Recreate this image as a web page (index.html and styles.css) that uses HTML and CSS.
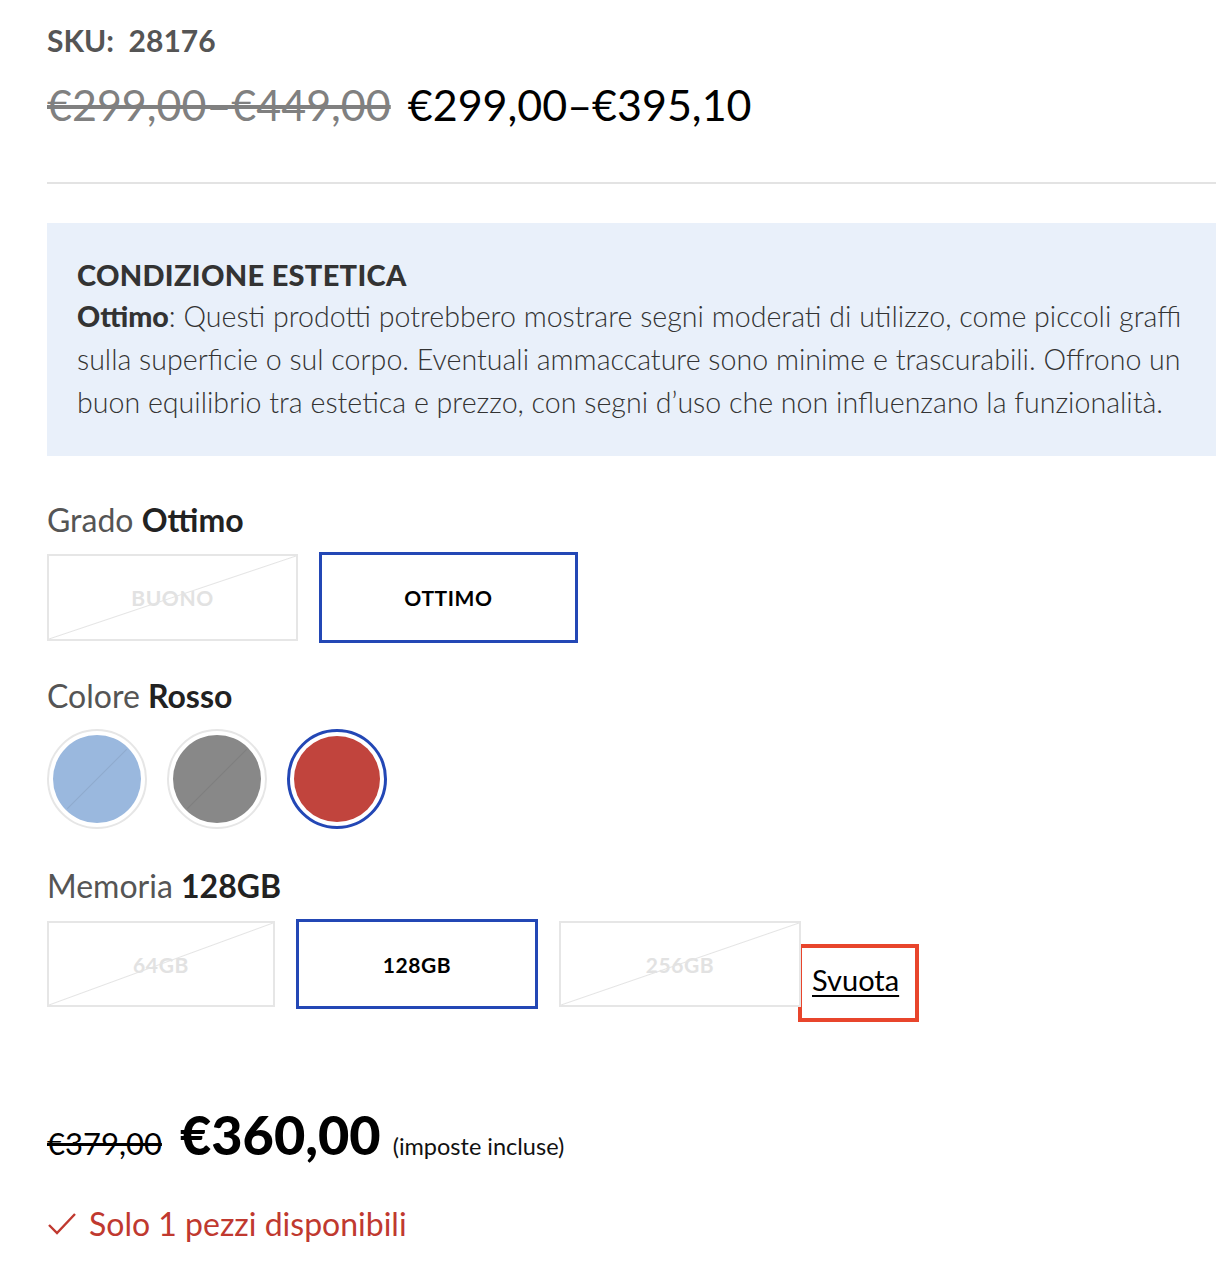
FILE: index.html
```html
<!DOCTYPE html>
<html lang="it">
	<head>
		<meta charset="UTF-8">
		<title>Prodotto</title>
		<link rel="stylesheet" href="styles.css">
	</head>
	<body>
		<div class="product">
			<p class="sku">SKU:&nbsp; 28176</p>
			<p class="price-range"><del>€299,00–€449,00</del> <span>€299,00–€395,10</span></p>
			<hr class="divider">

			<div class="condition">
				<h3>CONDIZIONE ESTETICA</h3>
				<p><strong>Ottimo</strong>: Questi prodotti potrebbero mostrare segni moderati di utilizzo, come piccoli graffi<br>sulla superficie o sul corpo. Eventuali ammaccature sono minime e trascurabili. Offrono un<br>buon equilibrio tra estetica e prezzo, con segni d’uso che non influenzano la funzionalità.</p>
			</div>

			<div class="option option-grade">
				<div class="option-label">Grado <strong>Ottimo</strong></div>
				<div class="option-values">
					<button class="value disabled grade">BUONO</button>
					<button class="value selected grade">OTTIMO</button>
				</div>
			</div>

			<div class="option option-color">
				<div class="option-label">Colore <strong>Rosso</strong></div>
				<div class="option-values">
					<button class="color disabled"><span class="dot blue"></span></button>
					<button class="color disabled"><span class="dot grey"></span></button>
					<button class="color selected"><span class="dot red"></span></button>
				</div>
			</div>

			<div class="option option-memory">
				<div class="option-label">Memoria <strong>128GB</strong></div>
				<div class="option-values">
					<button class="value disabled mem small">64GB</button>
					<button class="value selected mem">128GB</button>
					<button class="value disabled mem">256GB</button>
					<a href="#" class="reset">Svuota</a>
				</div>
			</div>

			<div class="final-price">
				<del>€379,00</del>
				<span class="amount">€360,00</span>
				<small>(imposte incluse)</small>
			</div>

			<div class="stock">
				<svg width="30" height="26" viewBox="0 0 30 26"><path d="M2 14 L10 22 L28 3" fill="none" stroke="#c0392f" stroke-width="2.4"/></svg>
				<span>Solo 1 pezzi disponibili</span>
			</div>
		</div>
	</body>
</html>
```

FILE: styles.css
```css
body {
	margin: 0;
	background: #fff;
	font-family: Lato, 'Noto Sans', sans-serif;
	color: #222;
	overflow: hidden;
}

.product {
	padding: 20px 0 40px 47px;
}

.sku {
	margin: 0;
	font-size: 30px;
	font-weight: 700;
	color: #555;
	line-height: 40px;
}

.price-range {
	margin: 20px 0 0;
	font-size: 43px;
	line-height: 50px;
	color: #000;
}

.price-range del {
	color: #808080;
	margin-right: 6px;
}

.divider {
	border: none;
	border-top: 2px solid #e3e3e3;
	margin: 52px 0 39px;
}

.condition {
	background-color: #e9f0fa;
	padding: 32px 30px 32px;
	color: #333;
}

.condition h3 {
	margin: 0;
	font-size: 29px;
	font-weight: 900;
	line-height: 40px;
	letter-spacing: 0.3px;
}

.condition p {
	margin: 0;
	font-size: 28.6px;
	line-height: 43px;
	font-weight: 300;
	white-space: nowrap;
}

.condition p strong {
	font-weight: 900;
}

.option-grade {
	margin-top: 44px;
}

.option-color {
	margin-top: 33px;
}

.option-memory {
	margin-top: 37px;
}

.option-label {
	font-size: 32px;
	color: #555;
	line-height: 40px;
	margin-bottom: 12px;
}

.option-color .option-label {
	margin-bottom: 13px;
}

.option-memory .option-label {
	margin-bottom: 13px;
}

.option-label strong {
	color: #222;
	font-weight: 700;
}

.option-values {
	display: flex;
	gap: 21px;
	align-items: flex-start;
}

.value {
	position: relative;
	background: #fff;
	border: 2px solid #e6e6e6;
	font-family: Lato, sans-serif;
	font-size: 21px;
	font-weight: 700;
	letter-spacing: 0.6px;
	color: #000;
	cursor: pointer;
	padding: 0;
	margin-top: 2px;
}

.value.grade {
	width: 251px;
	height: 87px;
}

.value.mem {
	width: 242px;
	height: 86px;
}

.value.mem.small {
	width: 228px;
}

.value.selected {
	border: 3px solid #2347b5;
	margin-top: 0;
}

.value.grade.selected {
	width: 259px;
	height: 91px;
}

.value.mem.selected {
	width: 242px;
	height: 90px;
}

.value.disabled {
	color: #e2e2e2;
}

.value.disabled::after {
	content: "";
	position: absolute;
	inset: 0;
	background: linear-gradient(to bottom right, transparent calc(50% - 1px), #e4e4e4 50%, transparent calc(50% + 1px));
}

.option-color .option-values {
	gap: 20px;
}

.color {
	position: relative;
	width: 100px;
	height: 100px;
	padding: 4px;
	border-radius: 50%;
	border: 2px solid #e6e6e6;
	background: #fff;
	cursor: pointer;
}

.color.selected {
	border: 3px solid #2347b5;
}

.color.disabled::after {
	content: "";
	position: absolute;
	inset: 6px;
	border-radius: 50%;
	background: linear-gradient(to bottom right, transparent calc(50% - 1px), rgba(0, 0, 0, 0.07) 50%, transparent calc(50% + 1px));
}

.dot {
	display: block;
	width: 100%;
	height: 100%;
	border-radius: 50%;
}

.dot.blue { background-color: #9ab8de; }
.dot.grey { background-color: #888888; }
.dot.red { background-color: #c1443d; }

.reset {
	margin: 25px 0 0 -24px;
	border: 4px solid #e8452c;
	padding: 16px 16px 22px 10px;
	font-size: 29px;
	line-height: 32px;
	color: #000;
	text-decoration: underline;
	text-underline-offset: 4px;
	text-decoration-thickness: 2px;
}

.final-price {
	margin-top: 80px;
	display: flex;
	align-items: baseline;
}

.final-price del {
	font-size: 31px;
	color: #000;
	margin-right: 18px;
}

.final-price .amount {
	font-size: 54px;
	font-weight: 900;
	color: #000;
	margin-right: 12px;
}

.final-price small {
	font-size: 23.5px;
	color: #111;
}

.stock {
	margin-top: 37px;
	display: flex;
	align-items: center;
	gap: 12px;
	color: #c0392f;
	font-size: 32px;
}
```
